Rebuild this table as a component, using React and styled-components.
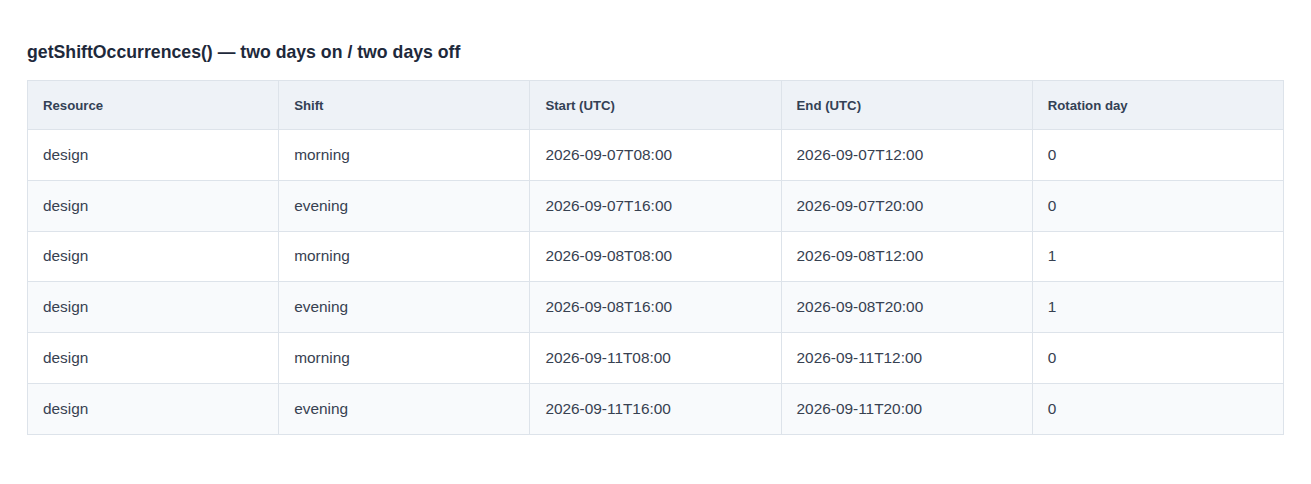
import React from "react";
import styled, { createGlobalStyle } from "styled-components";

const GlobalStyle = createGlobalStyle`
  body {
    margin: 0;
    background: #ffffff;
    font-family: "Liberation Sans", Arial, sans-serif;
  }
`;

const Page = styled.div`
  padding: 41px 28px 0 27px;
`;

const Title = styled.h3`
  margin: 0 0 17px;
  font-size: 17.7px;
  line-height: 22px;
  font-weight: 700;
  color: #1e293b;
`;

const Table = styled.table`
  width: 1257px;
  table-layout: fixed;
  border-collapse: collapse;
  font-size: 15.4px;
  color: #334155;
`;

const HeadCell = styled.th`
  height: 48px;
  padding: 0 15px;
  text-align: left;
  font-size: 13.2px;
  font-weight: 700;
  color: #334155;
  background: #eef2f7;
  border: 1px solid #dde3ea;
`;

const Row = styled.tr`
  background: ${(props) => (props.striped ? "#f8fafc" : "#ffffff")};
`;

const Cell = styled.td`
  height: 49.8px;
  padding: 0 15px;
  border: 1px solid #dde3ea;
  color: #374151;
`;

const columns = ["Resource", "Shift", "Start (UTC)", "End (UTC)", "Rotation day"];

const rows = [
  ["design", "morning", "2026-09-07T08:00", "2026-09-07T12:00", "0"],
  ["design", "evening", "2026-09-07T16:00", "2026-09-07T20:00", "0"],
  ["design", "morning", "2026-09-08T08:00", "2026-09-08T12:00", "1"],
  ["design", "evening", "2026-09-08T16:00", "2026-09-08T20:00", "1"],
  ["design", "morning", "2026-09-11T08:00", "2026-09-11T12:00", "0"],
  ["design", "evening", "2026-09-11T16:00", "2026-09-11T20:00", "0"],
];

const App = () => {
  return (
    <Page>
      <GlobalStyle />
      <Title>getShiftOccurrences() — two days on / two days off</Title>
      <Table>
        <thead>
          <tr>
            {columns.map((c) => (
              <HeadCell key={c}>{c}</HeadCell>
            ))}
          </tr>
        </thead>
        <tbody>
          {rows.map((r, i) => (
            <Row key={i} striped={i % 2 === 1}>
              {r.map((v, j) => (
                <Cell key={j}>{v}</Cell>
              ))}
            </Row>
          ))}
        </tbody>
      </Table>
    </Page>
  );
};

export default App;
